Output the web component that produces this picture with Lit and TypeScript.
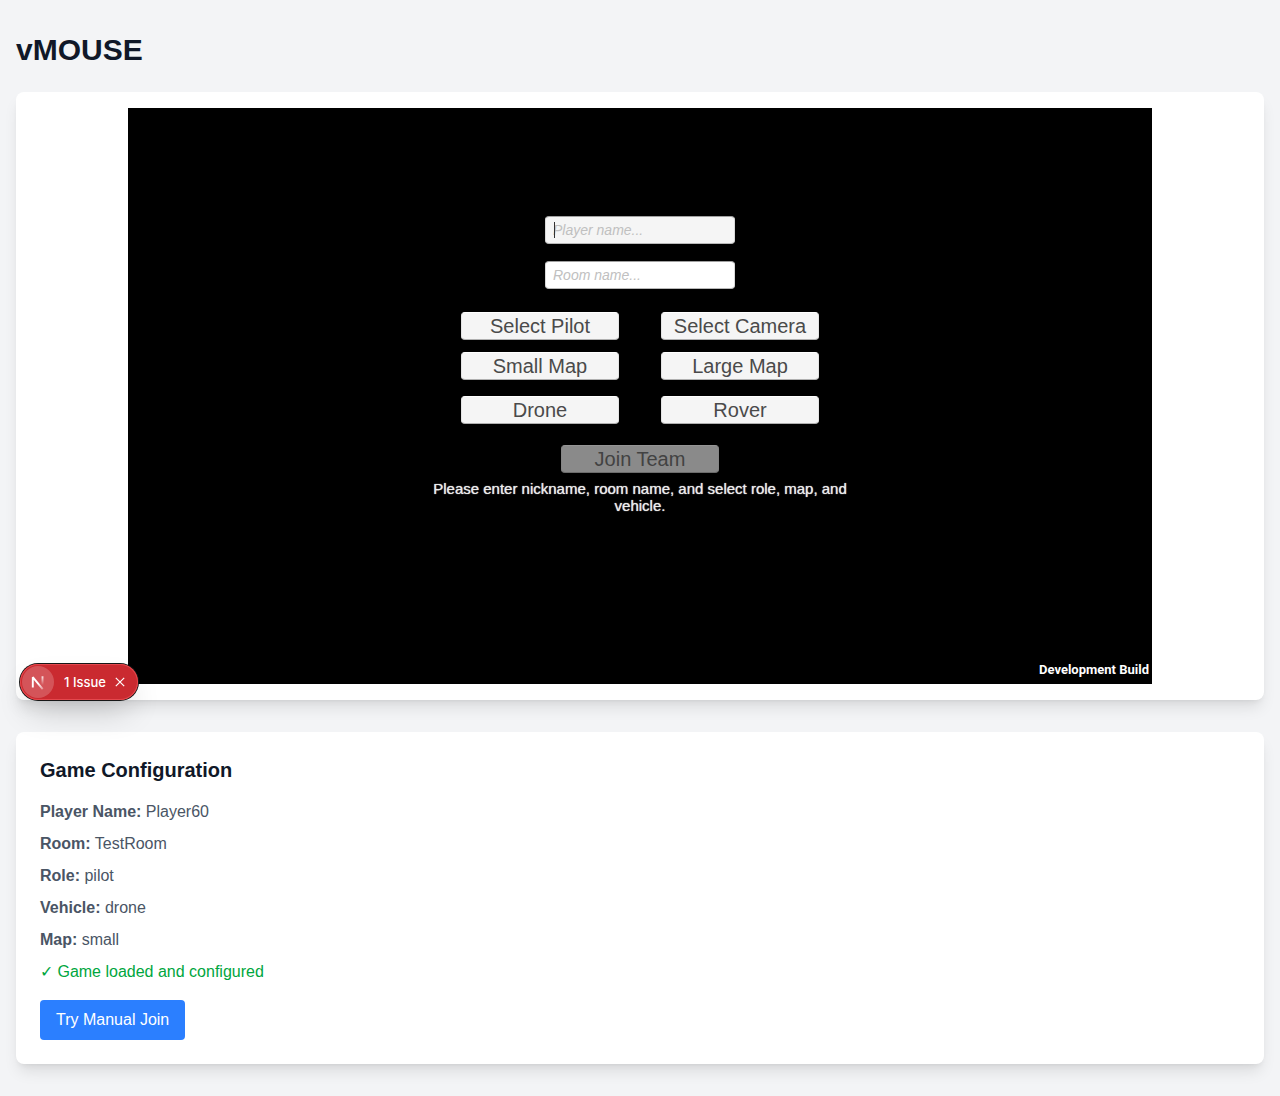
import { LitElement, html, css } from "lit";
import { customElement, state } from "lit/decorators.js";

@customElement("game-lobby")
export class GameLobby extends LitElement {
  static styles = css`
    :host {
      display: block;
    }
    .stage {
      box-sizing: border-box;
      position: relative;
      display: flex;
      flex-direction: column;
      align-items: center;
      max-width: 1024px;
      aspect-ratio: 16 / 9;
      margin: 0 auto;
      padding: 108px 16px 0;
      background: #000;
      color: #323232;
      font-family: "Liberation Sans", Arial, sans-serif;
    }
    .fields {
      display: grid;
      gap: 17px;
      width: 190px;
    }
    .field {
      position: relative;
      display: block;
    }
    .field input {
      box-sizing: border-box;
      display: block;
      width: 100%;
      height: 28px;
      padding: 0 7px;
      border: 1px solid;
      border-color: #a0a0a0 #d8d8d8 #b8b8b8;
      border-radius: 4px;
      background: #fff;
      color: #323232;
      font: 14px "Liberation Sans", Arial, sans-serif;
      outline: none;
    }
    .field input.active {
      background: #f5f5f5;
    }
    .field input::placeholder {
      color: #c0c0c0;
      font-style: italic;
      opacity: 1;
    }
    .caret {
      position: absolute;
      left: 9px;
      top: 6px;
      width: 1px;
      height: 16px;
      background: #323232;
    }
    .choices {
      display: grid;
      grid-template-columns: 158px 158px;
      column-gap: 42px;
      row-gap: 12px;
      margin-top: 23px;
    }
    .vehicles {
      margin-top: 16px;
    }
    button {
      box-sizing: border-box;
      width: 158px;
      height: 28px;
      padding: 0;
      border: 1px solid;
      border-color: #fff #e4e4e4 #b0b0b0;
      border-radius: 4px;
      background: #f5f5f5;
      color: #4a4a4a;
      font: 20px/26px "Liberation Sans", Arial, sans-serif;
    }
    button:disabled {
      margin-top: 21px;
      border-color: #959595 #858585 #6c6c6c;
      background: #8a8a8a;
      color: #424242;
    }
    .message {
      width: 100%;
      max-width: 440px;
      margin: 7px 0 0;
      color: #ececec;
      font-size: 15px;
      line-height: 17px;
      text-align: center;
      text-shadow: 0 0 1px #e6e6e6;
    }
    .build {
      position: absolute;
      right: 3px;
      bottom: 6px;
      color: #fff;
      font: bold 13px/16px Roboto, sans-serif;
    }
  `;

  render() {
    return html`
      <section class="stage" aria-label="Game">
        <div class="fields">
          <label class="field">
            <input class="active" type="text" placeholder="Player name..." aria-label="Player name" />
            <span class="caret"></span>
          </label>
          <label class="field">
            <input type="text" placeholder="Room name..." aria-label="Room name" />
          </label>
        </div>
        <div class="choices">
          <button type="button">Select Pilot</button>
          <button type="button">Select Camera</button>
          <button type="button">Small Map</button>
          <button type="button">Large Map</button>
        </div>
        <div class="choices vehicles">
          <button type="button">Drone</button>
          <button type="button">Rover</button>
        </div>
        <button type="button" disabled>Join Team</button>
        <p class="message">Please enter nickname, room name, and select role, map, and vehicle.</p>
        <span class="build">Development Build</span>
      </section>
    `;
  }
}

@customElement("issue-badge")
export class IssueBadge extends LitElement {
  static styles = css`
    :host {
      display: block;
    }
    .badge {
      display: flex;
      align-items: center;
      box-sizing: border-box;
      height: 36px;
      padding: 2px 10px 2px 2px;
      border-radius: 18px;
      background: #ca2a30;
      box-shadow:
        0 0 0 1px #171717,
        inset 0 0 0 1px #e5484d,
        0 16px 32px -8px rgba(0, 0, 0, 0.24);
      color: #fff;
    }
    button {
      display: flex;
      align-items: center;
      justify-content: center;
      padding: 0;
      border: 0;
      background: none;
      color: inherit;
      font: 500 13px/16px Inter, sans-serif;
    }
    .logo {
      width: 32px;
      height: 32px;
      border-radius: 50%;
      background: rgba(255, 255, 255, 0.2);
    }
    .open {
      width: 42px;
      margin-left: 10px;
      white-space: nowrap;
    }
    .close {
      width: 16px;
      height: 16px;
      margin-left: 6px;
    }
    svg {
      display: block;
    }
  `;

  render() {
    return html`
      <div class="badge">
        <button class="logo" type="button" aria-label="Open dev tools">
          <svg width="32" height="32" viewBox="0 0 32 32" fill="none" stroke-width="1.9">
            <defs>
              <linearGradient id="diagonal" x1="17" y1="17" x2="22" y2="23" gradientUnits="userSpaceOnUse">
                <stop stop-color="#fff" />
                <stop offset="1" stop-color="#fff" stop-opacity="0.3" />
              </linearGradient>
              <linearGradient id="stem" x1="20" y1="10" x2="20" y2="19" gradientUnits="userSpaceOnUse">
                <stop stop-color="#fff" stop-opacity="0.9" />
                <stop offset="1" stop-color="#fff" stop-opacity="0" />
              </linearGradient>
            </defs>
            <path d="M10.8 21.5V11.2L20.7 23.2" stroke="url(#diagonal)" stroke-linejoin="bevel" />
            <path d="M20.5 10.3V19" stroke="url(#stem)" />
          </svg>
        </button>
        <button class="open" type="button">1 Issue</button>
        <button class="close" type="button" aria-label="Dismiss">
          <svg width="10" height="10" viewBox="0 0 10 10" stroke="#fff" stroke-width="1.2">
            <path d="M0.8 0.8L9.2 9.2M9.2 0.8L0.8 9.2" />
          </svg>
        </button>
      </div>
    `;
  }
}

@customElement("app-root")
export class AppRoot extends LitElement {
  static styles = css`
    :host {
      display: block;
      min-height: 100vh;
      background: #f3f4f6;
      color: #101828;
      font: 16px/24px "Liberation Sans", Arial, sans-serif;
    }
    .page {
      padding: 32px 16px;
    }
    h1 {
      margin: 0 0 24px;
      font-size: 30px;
      line-height: 36px;
    }
    .card {
      position: relative;
      border-radius: 8px;
      background: #fff;
      box-shadow:
        0 10px 15px -3px rgba(0, 0, 0, 0.1),
        0 4px 6px -4px rgba(0, 0, 0, 0.1);
    }
    .game {
      margin-bottom: 32px;
      padding: 16px;
    }
    .overlay {
      position: absolute;
      left: 4px;
      bottom: 0;
      z-index: 1;
    }
    .config {
      display: flex;
      flex-direction: column;
      align-items: flex-start;
      gap: 8px;
      padding: 24px;
      color: #4a5565;
    }
    h2 {
      margin: 0 0 8px;
      color: #101828;
      font-size: 20px;
      line-height: 28px;
    }
    p {
      margin: 0;
    }
    .ready {
      color: #00a63e;
    }
    .join {
      margin-top: 8px;
      padding: 8px 16px;
      border: 0;
      border-radius: 4px;
      background: #2b7fff;
      color: #fff;
      font: inherit;
    }
  `;

  @state()
  private settings = [
    ["Player Name", "Player60"],
    ["Room", "TestRoom"],
    ["Role", "pilot"],
    ["Vehicle", "drone"],
    ["Map", "small"],
  ];

  render() {
    return html`
      <main class="page">
        <h1>vMOUSE</h1>
        <div class="card game">
          <game-lobby></game-lobby>
          <issue-badge class="overlay"></issue-badge>
        </div>
        <section class="card config">
          <h2>Game Configuration</h2>
          ${this.settings.map(([name, value]) => html`<p><strong>${name}:</strong> ${value}</p>`)}
          <p class="ready">✓ Game loaded and configured</p>
          <button class="join" type="button">Try Manual Join</button>
        </section>
      </main>
    `;
  }
}
